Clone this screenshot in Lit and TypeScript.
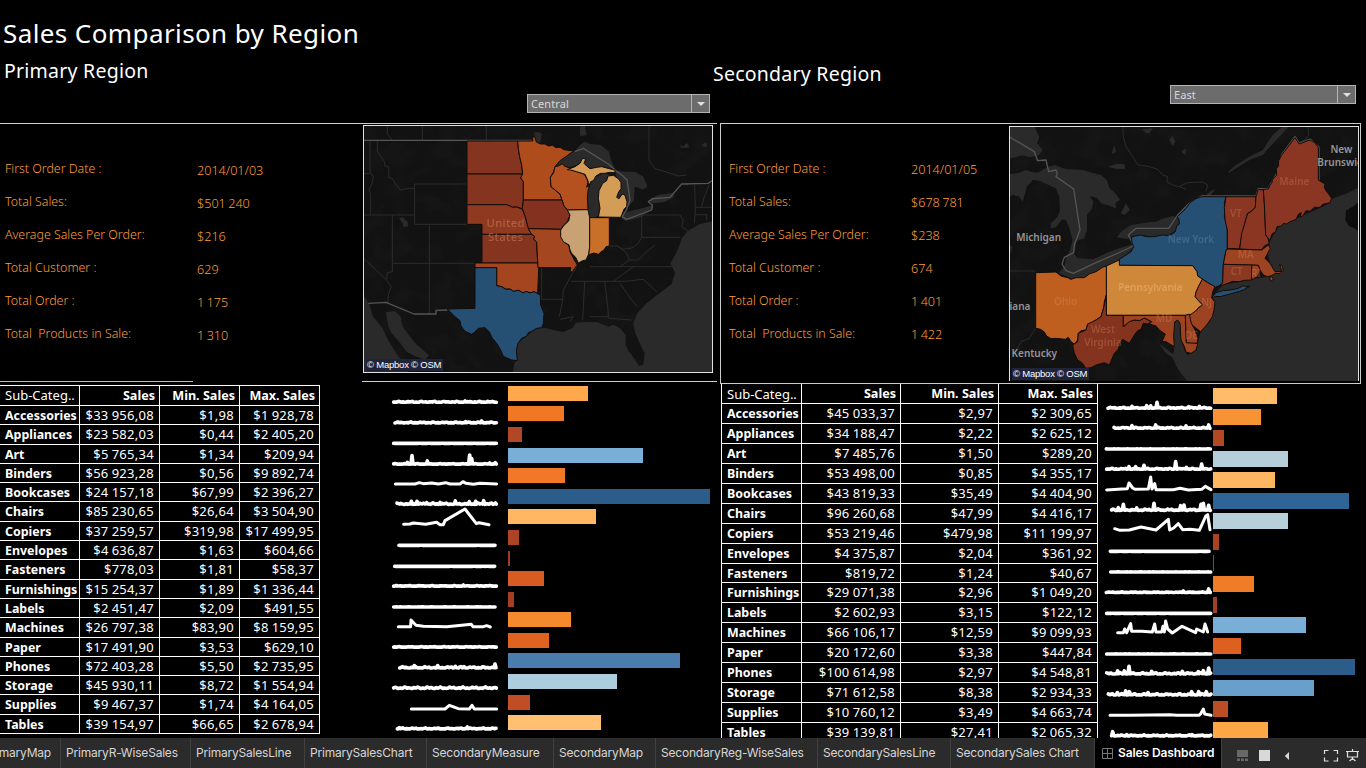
import { LitElement, html, svg, css } from "lit";
import { customElement, property } from "lit/decorators.js";

type Shape = [fill: string, points: string];
type Label = [text: string, x: number, y: number, kind: string];
type Bar = [y: number, width: number, fill: string];
type Spark = { path?: string; from?: number; to?: number; y?: number; amp?: number; peaks?: number[][] };

const SUBCATS = ["Accessories", "Appliances", "Art", "Binders", "Bookcases", "Chairs", "Copiers", "Envelopes", "Fasteners",
  "Furnishings", "Labels", "Machines", "Paper", "Phones", "Storage", "Supplies", "Tables"];

const PRIMARY_ROWS = `33 956,08|1,98|1 928,78
23 582,03|0,44|2 405,20
5 765,34|1,34|209,94
56 923,28|0,56|9 892,74
24 157,18|67,99|2 396,27
85 230,65|26,64|3 504,90
37 259,57|319,98|17 499,95
4 636,87|1,63|604,66
778,03|1,81|58,37
15 254,37|1,89|1 336,44
2 451,47|2,09|491,55
26 797,38|83,90|8 159,95
17 491,90|3,53|629,10
72 403,28|5,50|2 735,95
45 930,11|8,72|1 554,94
9 467,37|1,74|4 164,05
39 154,97|66,65|2 678,94`.split("\n").map((r) => r.split("|"));

const SECONDARY_ROWS = `45 033,37|2,97|2 309,65
34 188,47|2,22|2 625,12
7 485,76|1,50|289,20
53 498,00|0,85|4 355,17
43 819,33|35,49|4 404,90
96 260,68|47,99|4 416,17
53 219,46|479,98|11 199,97
4 375,87|2,04|361,92
819,72|1,24|40,67
29 071,38|2,96|1 049,20
2 602,93|3,15|122,12
66 106,17|12,59|9 099,93
20 172,60|3,38|447,84
100 614,98|2,97|4 548,81
71 612,58|8,38|2 934,33
10 760,12|3,49|4 663,74
39 139,81|27,41|2 065,32`.split("\n").map((r) => r.split("|"));

const PRIMARY_BARS: Bar[] = [
  [386, 80, "#ffa94c"], [406, 56, "#f07824"], [427, 14, "#b24725"], [448, 135, "#79aed6"], [468, 57, "#f07828"],
  [489, 202, "#2b5c8a"], [509, 88, "#ffb762"], [530, 11, "#ab4324"], [551, 2, "#9e3d22"], [571, 36, "#d85c22"],
  [592, 6, "#a23f24"], [612, 63, "#f5892d"], [633, 41, "#e06320"], [653, 172, "#4a7dae"], [674, 109, "#accdde"],
  [695, 22, "#bf4e24"], [715, 93, "#ffc071"],
];
const SECONDARY_BARS: Bar[] = [
  [388, 64, "#ffbb68"], [409, 48, "#f89335"], [430, 11, "#b44823"], [451, 75, "#b6ced9"], [472, 62, "#ffb661"],
  [493, 136, "#2f6496"], [513, 75, "#b7cfd8"], [534, 6, "#a84222"], [555, 1, "#9e3d22"], [576, 41, "#f07c28"],
  [597, 4, "#a23f24"], [617, 93, "#79aed6"], [638, 28, "#dd6020"], [659, 142, "#2b5c8a"], [680, 101, "#699fcb"],
  [701, 15, "#bd4d24"], [722, 55, "#fda747"],
];

const PRIMARY_SPARKS: Spark[] = [
  { from: 41, to: 349, y: 72, amp: 2, peaks: [[255, 68], [323, 69]] },
  { from: 45, to: 349, y: 134, amp: 2, peaks: [[257, 130], [305, 128]] },
  { from: 41, to: 349, y: 196, amp: 0 },
  { from: 41, to: 349, y: 258, amp: 1, peaks: [[82, 252], [96, 232], [142, 248], [269, 230], [275, 241], [329, 254], [346, 253]] },
  { path: "46,318 105,318 118,314 130,317 155,315 175,318 197,314 210,318 240,318 249,311 258,316 280,319 300,316 350,318" },
  { from: 51, to: 349, y: 378, amp: 3, peaks: [[94, 369], [111, 369], [140, 373], [180, 372], [226, 368], [268, 370], [287, 369], [311, 367], [346, 374]] },
  { path: "71,439 90,438 100,435 137,439 170,433 180,440 190,440 195,428 255,393 289,437 297,434 327,440" },
  { from: 57, to: 347, y: 502, amp: 0 },
  { from: 44, to: 347, y: 565, amp: 0 },
  { from: 41, to: 349, y: 624, amp: 1, peaks: [[250, 620]] },
  { from: 41, to: 346, y: 687, amp: 0 },
  { path: "55,746 92,746 93,726 108,742 130,745 200,746 245,742 274,739 279,746 310,746 320,743 331,747" },
  { from: 41, to: 349, y: 807, amp: 1 },
  { from: 59, to: 347, y: 869, amp: 3, peaks: [[103, 862], [173, 862], [226, 864], [252, 865], [345, 857]] },
  { from: 41, to: 349, y: 930, amp: 3 },
  { path: "94,993 195,993 208,982 235,992 268,993 276,982 283,993 350,993" },
  { from: 52, to: 349, y: 1052, amp: 2, peaks: [[58, 1048], [262, 1046]] },
];
const SECONDARY_SPARKS: Spark[] = [
  { from: 234, to: 543, y: 90, amp: 2, peaks: [[306, 84], [350, 82], [362, 83], [381, 72], [476, 85], [508, 84]] },
  { from: 252, to: 543, y: 150, amp: 2, peaks: [[306, 142], [377, 140], [468, 143], [536, 140]] },
  { from: 229, to: 543, y: 213, amp: 0 },
  { from: 230, to: 543, y: 273, amp: 2, peaks: [[297, 265], [317, 265], [342, 261], [437, 250], [469, 267], [515, 257]] },
  { path: "230,336 275,333 292,332 297,315 308,330 316,334 355,333 362,297 366,333 374,317 378,335 430,335 450,331 475,336 515,334 526,325 543,335" },
  { from: 245, to: 543, y: 396, amp: 3, peaks: [[265, 388], [280, 378], [320, 389], [372, 375], [452, 382], [462, 380], [513, 378], [520, 375], [536, 381]] },
  { path: "254,452 270,457 298,456 333,447 378,456 415,424 419,456 431,450 445,437 458,455 480,454 508,457 528,413 533,410 540,455" },
  { from: 241, to: 540, y: 520, amp: 0 },
  { from: 242, to: 543, y: 582, amp: 0 },
  { from: 229, to: 543, y: 643, amp: 1, peaks: [[460, 638], [536, 632]] },
  { from: 230, to: 543, y: 706, amp: 0 },
  { path: "263,764 280,764 284,753 290,764 302,737 305,760 335,760 367,762 374,738 378,762 395,762 399,745 403,762 407,729 413,753 427,765 456,745 497,764 500,753 520,762 525,738 533,762" },
  { from: 230, to: 543, y: 828, amp: 0 },
  { from: 230, to: 543, y: 887, amp: 3, peaks: [[263, 878], [283, 878], [297, 864], [365, 879], [457, 879], [505, 880], [520, 877], [536, 869]] },
  { from: 235, to: 543, y: 950, amp: 3, peaks: [[262, 943], [287, 938], [298, 940], [354, 943], [485, 940], [506, 940], [529, 940]] },
  { path: "240,1012 300,1012 420,1010 440,1012 507,1012 513,1006 520,993 524,1008 543,1012" },
  { from: 246, to: 543, y: 1073, amp: 2, peaks: [[248, 1060], [290, 1069], [486, 1069]] },
];

const PRIMARY_STATES: Shape[] = [
  ["#85341f", "321,63 473,63 475,85 479,110 485,135 488,162 321,162"],
  ["#85341f", "321,162 488,162 482,174 490,184 490,240 487,266 470,261 458,262 446,257 440,254 321,254"],
  ["#8f3a20", "321,254 440,254 458,262 470,261 487,268 496,290 502,312 508,332 515,343 366,343 366,313 321,313"],
  ["#85341f", "366,343 515,343 524,349 521,358 530,366 533,429 366,429"],
  ["#a5451f", "345,429 533,429 536,445 533,521 522,515 510,519 498,514 490,519 476,511 460,514 450,507 438,508 425,500 410,497 410,443 345,443"],
  ["#264f74", "345,443 410,443 410,497 425,500 438,508 450,507 460,514 476,511 490,519 498,514 510,519 522,515 533,521 541,525 542,555 552,580 550,610 545,623 530,625 515,634 505,638 500,648 485,655 474,670 469,690 472,722 455,720 430,709 422,690 410,670 397,655 388,636 375,623 355,625 345,636 335,643 315,634 303,618 300,602 285,590 262,567 345,565"],
  ["#af4c1c", "473,63 518,63 518,50 525,52 529,66 542,72 555,72 565,78 578,76 588,83 600,82 612,89 641,93 620,108 600,122 585,140 581,155 571,172 573,200 585,210 600,222 606,240 490,240 490,184 482,174 488,162 485,135 479,110 475,85"],
  ["#b5501f", "585,140 598,137 607,131 614,139 630,144 634,150 650,155 672,162 680,175 684,187 680,202 690,192 684,212 682,235 684,269 622,270 612,258 606,240 600,222 573,200 571,172 581,158"],
  ["#84311f", "490,240 606,240 612,258 622,270 630,285 622,305 608,318 604,328 505,326 496,290 487,266"],
  ["#a44620", "505,326 604,328 604,350 615,368 626,376 630,395 643,420 652,435 643,446 637,457 630,453 633,443 534,443 530,366 521,358 524,349 515,343"],
  ["#c9a274", "622,270 684,269 689,293 689,380 687,400 678,420 668,422 655,429 647,412 635,400 630,390 627,375 610,365 602,350 602,330 612,316 626,303 630,285"],
  ["#c8702a", "689,293 748,293 748,378 738,380 732,390 722,396 716,403 702,399 686,404 689,380"],
  ["#d39c57", "715,291 720,265 715,235 717,212 728,190 740,182 744,168 760,166 776,177 783,188 783,206 776,216 770,232 777,236 787,222 795,226 801,245 800,260 792,268 786,283 782,292"],
  ["#d39c57", "622,149 645,140 660,130 668,114 677,118 672,130 680,138 690,146 710,142 725,140 748,146 765,151 765,158 748,157 735,160 722,160 708,168 700,182 692,185 686,200 684,182 675,163 650,155 632,150"],
];
const PRIMARY_WATER = [
  "587,138 600,115 620,100 645,92 660,75 675,65 690,72 722,75 747,95 752,118 765,148 748,143 715,141 690,146 680,138 672,130 677,118 668,114 660,130 622,145",
  "684,202 695,187 708,170 735,160 750,166 742,182 728,190 717,212 715,235 720,265 713,288 695,296 684,286 682,240",
  "765,152 790,155 825,155 850,170 862,200 850,208 824,200 822,240 808,256 800,262 800,240 793,226 785,224 774,236 768,232 783,206 783,188 770,172",
  "782,292 800,276 835,268 880,256 876,268 845,290 810,300 795,302",
  "870,236 895,225 940,218 942,230 915,246 876,250",
  "660,20 674,15 680,46 660,48", "958,76 970,80 980,68 988,82 965,84", "1027,72 1040,68 1040,80 1028,80",
  "522,38 538,36 540,70 530,66 524,52", "522,38 545,40 543,60 530,66",
  "117,295 130,292 135,300 142,304 144,318 132,322 127,308",
  "1062,303 1062,760 458,760 462,735 469,720 469,690 474,670 500,648 530,625 555,624 580,630 608,636 638,625 648,608 680,606 712,607 745,620 760,614 780,625 797,645 797,675 805,692 820,712 836,737 850,735 854,700 842,675 826,640 820,610 832,580 860,550 900,518 935,492 945,460 932,430 948,400 960,372 965,355 985,332 1020,312",
  "9,525 28,552 38,588 68,625 84,660 112,705 145,745 145,762 9,762",
  "78,576 105,574 122,590 128,620 150,650 168,672 207,706 195,720 165,708 140,696 120,668 95,640 84,615",
];
const PRIMARY_LINES = [
  "82,15 82,42 97,61", "187,15 187,61", "379,15 379,61", "30,61 30,155 40,170 36,190 27,210 32,222 32,285",
  "12,161 30,161", "52,61 52,95 65,112 73,125 75,138 87,142 86,172 98,176 108,195 122,210 150,204 162,206",
  "164,192 321,192", "164,192 164,313 321,313", "12,285 164,285", "97,285 97,455", "208,313 208,582",
  "97,430 345,430", "12,416 80,480 94,500 86,520 83,550", "97,455 82,458 80,478",
  "867,15 867,120 885,146 925,158 955,168 980,165", "980,190 980,190 980,195 984,195",
  "845,285 960,285 970,300 965,320 985,335", "845,285 845,352 960,352", "845,352 833,372 815,384 790,388 770,378 748,378",
  "1004,195 1006,270 1003,310", "1006,262 1055,262", "1047,195 1030,240 1025,262", "1004,284 1040,284 1040,300",
  "690,440 945,440", "545,443 545,538 608,538", "632,484 795,484 850,478 890,515", "674,484 668,600",
  "734,484 743,560 746,595 815,600", "780,490 815,540 832,560", "600,598 640,590 630,605", "690,590 745,590",
  "650,440 632,470 610,510 608,540 598,590", "770,375 800,400 808,420 835,420 865,390 885,375",
  "808,420 780,440", "820,440 785,465 760,485",
];
const PRIMARY_BORDER = "9,61 518,61 M645,95 670,85 745,132 765,150 788,167 801,180 810,240 800,268 787,290 800,298 875,270 877,255 865,245 880,236 930,232 965,192 1045,190 1056,182 M25,550 78,547 162,582 228,582 228,571 262,570";

const SECONDARY_STATES: Shape[] = [
  ["#264f74", "377,350 405,345 420,350 445,350 470,345 490,347 508,335 512,318 520,312 519,298 514,290 540,265 552,248 570,236 587,230 660,230 655,250 657,262 655,290 662,310 664,330 664,385 660,392 652,433 650,487 640,497 628,502 605,488 589,477 575,468 573,455 560,437 340,436 340,418 360,405 375,395 383,380 377,365"],
  ["#264f74", "617,532 630,518 650,512 675,510 697,505 712,497 718,500 732,498 712,510 690,517 672,522 642,530 628,529 618,534"],
  ["#8a3622", "660,230 750,230 748,262 735,275 725,280 719,300 715,315 708,345 700,387 664,385 664,330 657,300 655,262"],
  ["#8a3622", "750,230 757,208 772,210 775,250 779,345 785,352 790,370 775,378 767,390 701,387 707,340 715,315 719,300 725,280 735,275 748,262"],
  ["#8a3622", "772,208 787,207 792,196 797,190 800,178 812,165 811,145 817,140 818,122 827,105 850,75 867,53 880,72 900,64 912,60 925,67 937,82 937,180 957,192 955,203 962,215 968,222 977,235 972,248 950,253 942,262 925,262 912,274 900,272 892,286 882,292 886,278 878,282 870,298 850,306 842,312 832,310 826,318 813,320 809,335 798,342 792,362 779,345 775,250"],
  ["#9e4321", "664,387 767,390 787,375 793,385 777,415 792,430 798,440 807,455 827,455 824,442 820,432 830,440 831,452 822,461 808,460 797,467 784,470 772,465 762,450 757,436 652,433 660,392"],
  ["#8a3822", "652,433 737,435 737,480 715,481 700,485 680,484 665,490 643,498 650,487"],
  ["#9e4321", "737,435 757,436 762,450 758,465 750,472 737,480"],
  ["#9e4321", "589,477 605,488 627,500 620,515 617,535 627,545 624,570 619,590 602,615 584,635 567,622 555,612 550,600 550,580 572,570 578,562 590,555 580,545 567,530 570,515 577,500"],
  ["#cf883a", "301,438 340,420 340,436 560,437 573,455 575,468 589,477 577,500 570,515 567,530 580,545 590,555 578,562 572,570 555,583 540,586 301,586"],
  ["#be5f1f", "89,458 150,456 165,468 185,473 195,478 210,473 235,473 250,462 270,455 290,442 301,438 301,525 295,545 293,565 285,590 270,600 255,611 245,612 240,630 225,632 217,640 215,660 205,672 195,665 187,652 178,658 150,655 135,656 122,648 115,636 104,628 89,625"],
  ["#84331f", "301,525 301,586 352,586 352,620 370,605 385,600 400,602 415,594 437,605 425,612 412,610 405,628 395,632 385,645 370,670 350,658 345,665 335,690 325,700 310,735 295,728 270,735 255,743 240,745 228,728 215,720 205,700 200,675 215,665 217,640 240,630 245,612 270,600 285,590 295,555"],
  ["#9e4321", "352,586 538,586 541,668 565,668 575,672 570,690 555,700 540,696 535,680 525,660 522,610 515,600 506,606 503,650 505,680 480,665 468,665 478,642 462,632 450,618 430,612 437,605 415,594 400,602 385,600 370,605 352,620"],
  ["#9e4321", "538,586 550,582 556,610 568,632 576,655 573,670 541,668"],
  ["#9e4321", "790,478 796,468 803,478 796,482"],
];
const SECONDARY_WATER = [
  "9,15 85,15 92,35 100,52 93,70 110,90 98,105 70,112 50,106 9,116",
  "9,162 35,160 60,150 75,155 95,158 125,140 148,136 180,148 230,150 262,160 285,165 302,180 310,205 330,222 342,240 328,248 330,265 305,255 285,250 275,235 252,228 262,245 258,265 243,285 243,330 235,355 212,362 205,395 190,400 200,360 190,325 180,300 168,298 150,322 135,325 133,312 155,290 162,270 160,230 150,205 100,182 80,180 62,200 50,246 40,230 20,225 9,230",
  "332,352 345,335 375,315 420,308 450,305 470,296 500,288 520,298 518,315 510,330 490,345 445,350 405,345 378,350 362,357",
  "157,458 175,440 180,415 190,395 200,398 215,415 262,418 300,400 340,385 383,372 384,382 360,405 340,420 300,440 240,470 200,478",
  "305,140 330,132 355,132 358,146 330,146", "345,280 360,250 372,270 355,285", "318,95 325,75 330,95 320,102",
  "490,60 500,48 508,65 500,78", "408,28 440,25 430,40 420,38", "526,95 540,85 538,105", "9,372 18,382 14,400 9,402",
  "977,237 1000,228 1020,222 1056,203 1056,785 548,785 540,760 528,735 545,705 570,690 584,635 627,545 617,530 650,495 700,486 750,475 790,470 792,430 785,400 792,362 820,318 882,290 940,265 972,250",
  "506,606 515,600 522,610 525,660 535,690 550,715 548,745 545,785 525,760 512,740 500,715 505,680 500,650",
  "458,670 485,690 505,705 512,720 480,700", "666,155 690,135 730,110 770,90 800,45 830,20 850,18 820,50 790,82 770,105 730,120 690,145 670,158", "600,225 615,212 628,208 612,228",
];
const SECONDARY_LINES = [
  "350,15 352,50 360,80 380,110 395,134 430,140 455,148 470,165 485,170 482,185 500,195 520,200 540,208",
  "905,15 908,45 898,58 880,68", "522,198 545,188 590,186 605,195 600,215", "12,453 88,453", "89,625 70,655 45,665 30,695",
];
const SECONDARY_BORDER = "9,50 85,95 95,122 120,120 128,155 150,150 154,162 150,170 203,207 222,330 205,375 203,398 175,412 168,432 180,452 202,460 265,430 330,402 382,378 377,365 367,345 390,325 488,325 515,285 550,250 587,228 750,228 757,206 787,205 812,160 827,103 867,50 880,70 912,57 939,82 939,180";

@customElement("region-map")
class RegionMap extends LitElement {
  @property({ attribute: false }) box = "";
  @property({ attribute: false }) states: Shape[] = [];
  @property({ attribute: false }) water: string[] = [];
  @property({ attribute: false }) lines: string[] = [];
  @property({ attribute: false }) border = "";
  @property({ attribute: false }) labels: Label[] = [];
  /** Dark land drawn over the sea, such as Nova Scotia. */
  @property({ attribute: false }) islands: string[] = [];

  static styles = css`
    :host { display: block; position: relative; background: #121212; overflow: hidden; }
    svg { display: block; width: 100%; height: 100%; }
    .water polygon { fill: #2b2b2b; }
    .water .island { fill: #0c0c0c; }
    .lines path { fill: none; stroke: #303030; stroke-width: 2.6; }
    .frontier { fill: none; stroke: #555; stroke-width: 4; stroke-linejoin: round; }
    .states polygon { stroke: #120c08; stroke-width: 3; stroke-linejoin: round; }
    text { font-family: "Noto Sans", sans-serif; font-weight: 500; text-anchor: middle; }
    .us { font-size: 34px; fill: #ba6b4b; opacity: .75; letter-spacing: 1px; }
    .st { font-size: 30px; fill: #e8a078; opacity: .25; font-weight: 600; }
    .big { font-size: 30px; fill: #f3c193; opacity: .42; font-weight: 600; }
    .ny { font-size: 30px; fill: #5c7f9f; opacity: .5; font-weight: 600; }
    .out { font-size: 30px; fill: #959595; font-weight: 600; }
    .credit {
      position: absolute; left: 2px; bottom: 1px; width: 76px; height: 12px; padding-left: 1px; background: #20243a;
      color: #fff; font: 9.5px/12px "Liberation Sans", sans-serif; letter-spacing: -.22px; white-space: nowrap;
    }
  `;

  render() {
    return html`
      <svg viewBox=${this.box} preserveAspectRatio="xMinYMin slice">
        <defs>
          <filter id="rough" x="-5%" y="-5%" width="110%" height="110%">
            <feTurbulence type="fractalNoise" baseFrequency="0.12" numOctaves="2" seed="4"></feTurbulence>
            <feDisplacementMap in="SourceGraphic" scale="4" xChannelSelector="R" yChannelSelector="G"></feDisplacementMap>
          </filter>
          <filter id="relief" x="0" y="0" width="100%" height="100%">
            <feTurbulence type="fractalNoise" baseFrequency="0.014" numOctaves="3" seed="11"></feTurbulence>
            <feColorMatrix values="0 0 0 0 0.01  0 0 0 0 0.01  0 0 0 0 0.01  4 0 0 0 -1.8"></feColorMatrix>
          </filter>
        </defs>
        <rect x="0" y="0" width="1080" height="800" filter="url(#relief)" opacity=".5"></rect>
        <g class="lines">${this.lines.map((p) => svg`<path d="M${p}"></path>`)}</g>
        <g class="water" filter="url(#rough)">
          ${this.water.map((p) => svg`<polygon points=${p}></polygon>`)}
          ${this.islands.map((p) => svg`<polygon class="island" points=${p}></polygon>`)}
        </g>
        <path class="frontier" d="M${this.border}"></path>
        <g class="states">${this.states.map(([f, p]) => svg`<polygon fill=${f} points=${p}></polygon>`)}</g>
        ${this.labels.map(([t, x, y, k]) => svg`<text class=${k} x=${x} y=${y}>${t}</text>`)}
      </svg>
      <div class="credit">© Mapbox © OSM</div>`;
  }
}

@customElement("sales-charts")
class SalesCharts extends LitElement {
  @property({ attribute: false }) box = "";
  @property({ attribute: false }) originX = 0;
  @property({ attribute: false }) barX = 0;
  @property({ attribute: false }) barHeight = 15;
  @property({ attribute: false }) bars: Bar[] = [];
  @property({ attribute: false }) sparks: Spark[] = [];

  static styles = css`
    :host { display: block; }
    svg { display: block; width: 100%; height: 100%; }
    polyline { fill: none; stroke: #fff; stroke-width: 11; stroke-linejoin: round; stroke-linecap: round; }
    .thin { stroke-width: 9; }
  `;

  private points(s: Spark) {
    if (s.path) return s.path;
    const { from = 0, to = 0, y = 0, amp = 0, peaks = [] } = s;
    const out: number[][] = [];
    for (let x = from, i = 0; x <= to; x += 4, i++) {
      if (peaks.some((p) => Math.abs(p[0] - x) < 4)) continue;
      const wave = Math.sin(i * 1.3 + y) * Math.sin(i * 0.57 + y * 2);
      out.push([x, y - Math.max(-0.3, wave) * (amp + 0.3)]);
    }
    for (const [px, py] of peaks) out.push([px - 3, y], [px, py + 1], [px + 3, y]);
    return out.sort((a, b) => a[0] - b[0]).map((p) => p.join(",")).join(" ");
  }

  render() {
    return html`<svg viewBox=${this.box}>
      <g shape-rendering="crispEdges">
        ${this.bars.map(([y, w, f]) => svg`<rect x=${this.barX} y=${y} width=${w} height=${this.barHeight} fill=${f}></rect>`)}
      </g>
      <g transform="translate(${this.originX} 378) scale(.33333)">
        ${this.sparks.map((s) => svg`<polyline class=${s.path ? "thin" : ""} points=${this.points(s)}></polyline>`)}
      </g>
    </svg>`;
  }
}

@customElement("app-root")
class AppRoot extends LitElement {
  static styles = css`
    :host { display: block; width: 1366px; height: 768px; background: #000; color: #fff; overflow: hidden;
      font-family: "Noto Sans", sans-serif; }
    * { box-sizing: border-box; }
    .board { display: grid; grid-template-columns: 720px 646px; height: 738px; overflow: hidden; }
    .col { display: flex; flex-direction: column; min-width: 0; height: 738px; overflow: hidden; }
    .right { overflow: visible; }
    h1 { margin: 0; height: 52px; padding: 15px 0 0 3px; font-size: 26px; line-height: 36px; font-weight: 400; letter-spacing: .4px; white-space: nowrap; }
    h2 { margin: 0; font-weight: 400; font-size: 19.5px; line-height: 26px; letter-spacing: .24px; white-space: nowrap; }
    .left h2 { height: 42px; padding: 6px 0 0 4px; }
    .right h2 { height: 86px; padding-top: 61px; margin-left: -7px; }
    .pick { display: flex; justify-content: flex-end; }
    .left .pick { height: 29px; padding-right: 10px; }
    .right .pick { height: 37px; padding-right: 10px; }
    .select { display: flex; width: 183px; height: 19px; background: #6c6c6c; border: 1px solid #b4b4b4;
      color: #d8d8d8; font-size: 11px; line-height: 17px; padding-left: 3px; letter-spacing: .1px; }
    .right .select { width: 186px; }
    .right .pick .select { margin-top: -1px; }
    .select span { flex: 1; }
    .select i { width: 18px; border-left: 1px solid #b4b4b4; display: grid; place-items: center; }
    .select i::after { content: ""; border: 4px solid transparent; border-top: 4px solid #e0e0e0; border-bottom: 0; }
    .left .info { display: flex; width: 717px; height: 258px; border-top: 1px solid #ccc; }
    .right .info { display: flex; width: 641px; height: 261px; border: 1px solid #ccc; }
    .stats { display: grid; grid-template-columns: 192px 1fr; grid-auto-rows: 33px; color: #ff9d38;
      font-weight: 300; font-size: 12.4px; line-height: 33px; white-space: pre; padding: 28px 0 0 5px; align-content: start; }
    .left .stats { width: 363px; }
    .right .stats { width: 288px; grid-template-columns: 182px 1fr; padding-left: 8px; }
    .stats b { font-weight: 300; padding-top: 2px; font-size: 12.6px; word-spacing: -.8px; }
    .right .stats b { padding-top: 1px; }
    .map { border: 1px solid #e2e2e2; }
    .left .map { width: 350px; height: 248px; margin-top: 1px; }
    .right .map { width: 350px; height: 255px; margin-top: 2px; border-bottom: 0; }
    .rules { display: flex; height: 1px; justify-content: space-between; width: 717px; }
    .rules i { width: 193px; background: #bbb; }
    .rules i + i { width: 355px; background: #ccc; }
    .detail { display: flex; flex: none; }
    .left .detail { height: 356px; }
    .right .detail { height: 354px; padding-left: 1px; }
    .table { display: grid; font-size: 13px; white-space: nowrap; flex: none; }
    .left .table { margin-top: 3px; grid-template-columns: repeat(4, 80px); border-top: 1px solid #fff; align-content: start;
      grid-template-rows: 20px 19px 20px 19px 19px 19px 20px 19px 19px 20px 19px 19px 20px 19px 19px 19px 20px 19px; }
    .right .table { grid-template-columns: 80px 99px 98px 99px; border-left: 1px solid #fff; align-content: start;
      grid-template-rows: 20px repeat(8, 20px) 19px repeat(8, 20px); }
    .table div { border-right: 1px solid #fff; border-bottom: 1px solid #fff; padding-right: 5px; text-align: right;
      line-height: 18px; min-width: 0; letter-spacing: .28px; word-spacing: -.6px; }
    .table .name { padding: 0 0 0 5px; text-align: left; font-weight: 700; font-size: 12.4px; line-height: 20px; letter-spacing: 0; }
    .table .head { font-weight: 700; font-size: 12.6px; line-height: 20px; padding-right: 4px; letter-spacing: 0; word-spacing: 0; }
    .table .first { font-weight: 400; padding: 0 0 0 5px; text-align: left; font-size: 13px; }
    .left .table .head { line-height: 19px; }
    .left sales-charts { width: 400px; height: 356px; }
    .right sales-charts { width: 268px; height: 354px; }
    .tabs { display: flex; height: 30px; background: #2b2b2b; color: #d6d6d6; font: 12px/30px Inter, "Noto Sans", sans-serif;
      letter-spacing: -.2px; overflow: hidden; }
    .tab { flex: none; border-right: 1px solid #414141; padding-left: 5px; white-space: nowrap; }
    .cut { display: flex; justify-content: flex-end; padding: 0 9px 0 0; }
    .active { background: #000; color: #fff; font-weight: 600; display: flex; align-items: center; gap: 5px; padding-left: 7px; letter-spacing: -.1px; }
    .w0 { width: 61px; } .w1 { width: 130px; } .w2 { width: 114px; } .w3 { width: 122px; } .w4 { width: 127px; }
    .w5 { width: 102px; } .w6 { width: 162px; } .w7 { width: 133px; } .w8 { width: 144px; } .w9 { width: 127px; }
    .tools { flex: none; }
  `;

  private table(rows: string[][]) {
    return html`<div class="table">
      <div class="head first">Sub-Categ..</div><div class="head">Sales</div><div class="head">Min. Sales</div><div class="head">Max. Sales</div>
      ${rows.map((r, i) => html`<div class="name">${SUBCATS[i]}</div>${r.map((v) => html`<div>$${v}</div>`)}`)}
    </div>`;
  }

  private stats(values: string[]) {
    const labels = ["First Order Date :", "Total Sales:", "Average Sales Per Order:", "Total Customer :", "Total Order :", "Total  Products in Sale:"];
    return html`<div class="stats">${labels.map((l, i) => html`<span>${l}</span><b>${values[i]}</b>`)}</div>`;
  }

  render() {
    const tabs = ["PrimaryMap", "PrimaryR-WiseSales", "PrimarySalesLine", "PrimarySalesChart", "SecondaryMeasure", "SecondaryMap",
      "SecondaryReg-WiseSales", "SecondarySalesLine", "SecondarySales Chart"];
    return html`
      <main class="board">
        <section class="col left">
          <h1>Sales Comparison by Region</h1>
          <h2>Primary Region</h2>
          <div class="pick"><div class="select"><span>Central</span><i></i></div></div>
          <div class="info">
            ${this.stats(["2014/01/03", "$501 240", "$216", "629", "1 175", "1 310"])}
            <region-map class="map" .box=${"12 18 1044 738"} .states=${PRIMARY_STATES} .water=${PRIMARY_WATER} .lines=${PRIMARY_LINES}
              .border=${PRIMARY_BORDER} .labels=${[["United", 437, 320, "us"], ["States", 437, 364, "us"]]}></region-map>
          </div>
          <div class="rules"><i></i><i></i></div>
          <div class="detail">
            ${this.table(PRIMARY_ROWS)}
            <sales-charts .box=${"320 382 400 356"} .originX=${380} .barX=${508} .barHeight=${15} .bars=${PRIMARY_BARS} .sparks=${PRIMARY_SPARKS}></sales-charts>
          </div>
        </section>
        <section class="col right">
          <h2>Secondary Region</h2>
          <div class="pick"><div class="select"><span>East</span><i></i></div></div>
          <div class="info">
            ${this.stats(["2014/01/05", "$678 781", "$238", "674", "1 401", "1 422"])}
            <region-map class="map" .box=${"12 21 1044 762"} .states=${SECONDARY_STATES} .water=${SECONDARY_WATER} .lines=${SECONDARY_LINES}
              .islands=${["1020,272 1040,260 1060,245 1060,335 1045,325 1028,318 1018,300"]}
              .border=${SECONDARY_BORDER} .labels=${[
                ["Michigan", 98, 363, "out"], ["Ohio", 179, 554, "st"], ["Pennsylvania", 433, 514, "big"], ["West", 291, 639, "st"],
                ["Virginia", 291, 677, "st"], ["MD", 474, 607, "st"], ["NJ", 602, 558, "st"], ["DE", 556, 657, "st"], ["CT", 692, 465, "st"],
                ["RI", 750, 470, "st"], ["MA", 719, 413, "st"], ["VT", 690, 292, "st"], ["Maine", 865, 195, "st"], ["New York", 555, 370, "ny"],
                ["New", 1006, 100, "out"], ["Brunswick", 1010, 138, "out"], ["iana", 42, 570, "out"], ["Kentucky", 85, 712, "out"],
              ]}></region-map>
          </div>
          <div class="detail">
            ${this.table(SECONDARY_ROWS)}
            <sales-charts .box=${"1098 384 268 354"} .originX=${1030} .barX=${1213} .barHeight=${16} .bars=${SECONDARY_BARS} .sparks=${SECONDARY_SPARKS}></sales-charts>
          </div>
        </section>
      </main>
      <nav class="tabs">
        ${tabs.map((t, i) => html`<div class="tab w${i} ${i === 0 ? "cut" : ""}">${t}</div>`)}
        <div class="tab active w9">
          <svg width="11" height="11" viewBox="0 0 11 11" fill="none" stroke="#777"><path d="M.5.5h10v10H.5zM5.5.5v10M.5 5.5h10"></path></svg>
          <span>Sales Dashboard</span>
        </div>
        <svg class="tools" width="144" height="30" viewBox="1222 738 144 30">
          <g fill="#686868"><path d="M1237 750h11v7h-11zM1237 758.500h3v2.500h-3zM1241 758.500h3v2.500h-3zM1245 758.500h3v2.500h-3z"></path></g>
          <path fill="#d8d8d8" d="M1259 750h11v11h-11zM1289 752v8l-4.200-4z"></path>
          <path fill="none" stroke="#e0e0e0" stroke-width="1.200" d="M1324.500 754v-3.500h4M1333.500 750.500h4v3.500M1337.500 757.500v3.500h-4M1328.500 761h-4v-3.500M1346 751.500h13M1347.500 751.500v5.500h10v-5.500M1352.500 749v2M1352.500 757v3M1349.500 761l3-2.500 3 2.500"></path>
        </svg>
      </nav>`;
  }
}
